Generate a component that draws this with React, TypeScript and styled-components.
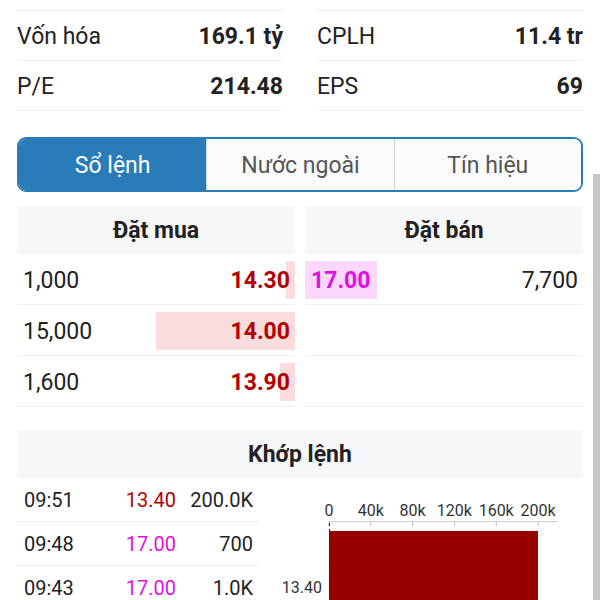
import React from 'react';
import styled, { createGlobalStyle } from 'styled-components';

const GlobalStyle = createGlobalStyle`
    html, body {
        margin: 0;
        padding: 0;
        background: #ffffff;
        overflow: hidden;
    }
    body {
        font-family: Roboto, 'Noto Sans', 'Liberation Sans', sans-serif;
        color: #222222;
    }
`;

const Colors = {
    RED: '#b30000',
    MAGENTA: '#e010e0',
    BAR_RED: '#990000',
    BLUE: '#2a7cb8',
    LINE: '#efefef',
    HEADER_BG: '#f6f7f8',
};

const Page = styled.div`
    position: relative;
    width: 600px;
    height: 600px;
    overflow: hidden;
    padding: 10px 17px 0;
    box-sizing: border-box;
`;

const StatsGrid = styled.div`
    display: grid;
    grid-template-columns: 1fr 1fr;
    column-gap: 34px;
`;

const StatColumn = styled.div`
    border-top: 1px solid ${Colors.LINE};
`;

const StatRow = styled.div`
    display: flex;
    justify-content: space-between;
    align-items: center;
    height: 49px;
    padding-top: 1px;
    box-sizing: border-box;
    height: 50px;
    border-bottom: 1px solid ${Colors.LINE};
    font-size: 23px;
`;

const StatValue = styled.span`
    font-weight: 700;
`;

const Tabs = styled.div`
    display: grid;
    grid-template-columns: repeat(3, 1fr);
    margin-top: 26px;
    height: 55px;
    border: 2px solid ${Colors.BLUE};
    border-radius: 9px;
    overflow: hidden;
    box-sizing: border-box;
`;

const Tab = styled.div<{ $active?: boolean }>`
    display: flex;
    align-items: center;
    justify-content: center;
    padding-top: 1px;
    font-size: 23px;
    background: ${(p) => (p.$active ? Colors.BLUE : '#fafafa')};
    color: ${(p) => (p.$active ? '#ffffff' : '#555555')};
    & + & {
        border-left: 1px solid #c9d3da;
    }
`;

const OrderBook = styled.div`
    display: grid;
    grid-template-columns: 1fr 1fr;
    column-gap: 10px;
    margin-top: 14px;
`;

const SectionHeader = styled.div`
    display: flex;
    align-items: center;
    justify-content: center;
    height: 48px;
    background: ${Colors.HEADER_BG};
    font-size: 23px;
    font-weight: 700;
`;

const BookRow = styled.div`
    display: flex;
    align-items: center;
    justify-content: space-between;
    height: 51px;
    padding-top: 2px;
    box-sizing: border-box;
    border-bottom: 1px solid ${Colors.LINE};
    font-size: 23px;
`;

const Qty = styled.span<{ $side: 'bid' | 'ask' }>`
    padding: ${(p) => (p.$side === 'bid' ? '0 0 0 6px' : '0 5px 0 0')};
`;

const PriceCell = styled.div<{ $side: 'bid' | 'ask' }>`
    position: relative;
    display: flex;
    justify-content: ${(p) => (p.$side === 'bid' ? 'flex-end' : 'flex-start')};
    align-items: center;
    height: 38px;
    min-width: 72px;
    padding: ${(p) => (p.$side === 'bid' ? '0 5px 0 0' : '0 0 0 6px')};
    box-sizing: border-box;
`;

const VolumeBar = styled.div<{ $side: 'bid' | 'ask' }>`
    position: absolute;
    top: 0;
    bottom: 0;
    ${(p) => (p.$side === 'bid' ? 'right: 0;' : 'left: 0;')}
    background: ${(p) => (p.$side === 'bid' ? '#fadcdc' : '#fcd8fc')};
`;

const Price = styled.span<{ $color: string }>`
    position: relative;
    color: ${(p) => p.$color};
    font-weight: 700;
`;

const MatchHeader = styled(SectionHeader)`
    margin-top: 23px;
`;

const MatchBody = styled.div`
    display: grid;
    grid-template-columns: 243px 1fr;
`;

const MatchRow = styled.div`
    display: grid;
    grid-template-columns: 1fr 76px 77px;
    align-items: center;
    height: 43px;
    padding: 0 7px;
    border-bottom: 1px solid ${Colors.LINE};
    font-size: 20px;
`;

const MatchCell = styled.span<{ $color?: string }>`
    text-align: right;
    color: ${(p) => p.$color || '#222222'};
    &:first-child {
        text-align: left;
    }
`;

const ChartBox = styled.div`
    height: 122px;
`;

const ScrollThumb = styled.div`
    position: absolute;
    top: 174px;
    right: 0;
    bottom: 0;
    width: 7px;
    background: #c6c6c6;
`;

const stats = [
    [
        ['Vốn hóa', '169.1 tỷ'],
        ['P/E', '214.48'],
    ],
    [
        ['CPLH', '11.4 tr'],
        ['EPS', '69'],
    ],
];

const bids = [
    { qty: '1,000', price: '14.30', bar: 9 },
    { qty: '15,000', price: '14.00', bar: 139 },
    { qty: '1,600', price: '13.90', bar: 15 },
];

const asks = [{ qty: '7,700', price: '17.00', bar: 72 }];

const matches = [
    { time: '09:51', price: '13.40', vol: '200.0K', color: Colors.RED },
    { time: '09:48', price: '17.00', vol: '700', color: Colors.MAGENTA },
    { time: '09:43', price: '17.00', vol: '1.0K', color: Colors.MAGENTA },
];

const MatchChart: React.FC = () => {
    const x0 = 69;
    const step = 41.8;
    const ticks = ['0', '40k', '80k', '120k', '160k', '200k'];
    return (
        <svg width="340" height="122" viewBox="0 0 340 122">
            {ticks.map((t, i) => (
                <g key={t}>
                    <text
                        x={x0 + i * step}
                        y={38}
                        textAnchor="middle"
                        fontSize="16"
                        fill="#333"
                        fontFamily="Roboto, sans-serif"
                    >
                        {t}
                    </text>
                    <line x1={x0 + i * step} y1={43} x2={x0 + i * step} y2={48} stroke="#bbb" />
                </g>
            ))}
            <line x1={x0} y1={43.5} x2={298} y2={43.5} stroke="#ccc" />
            <rect x={x0} y={53} width={step * 5} height={80} fill={Colors.BAR_RED} />
            <line x1={x0 + 0.5} y1={45} x2={x0 + 0.5} y2={122} stroke="#7a0000" strokeDasharray="3 3" />
            <text x={62} y={115} textAnchor="end" fontSize="16" fill="#333" fontFamily="Roboto, sans-serif">
                13.40
            </text>
        </svg>
    );
};

export default function App() {
    return (
        <>
            <GlobalStyle />
            <Page>
                <StatsGrid>
                    {stats.map((col, ci) => (
                        <StatColumn key={ci}>
                            {col.map(([label, value]) => (
                                <StatRow key={label}>
                                    <span>{label}</span>
                                    <StatValue>{value}</StatValue>
                                </StatRow>
                            ))}
                        </StatColumn>
                    ))}
                </StatsGrid>

                <Tabs>
                    <Tab $active>Sổ lệnh</Tab>
                    <Tab>Nước ngoài</Tab>
                    <Tab>Tín hiệu</Tab>
                </Tabs>

                <OrderBook>
                    <div>
                        <SectionHeader>Đặt mua</SectionHeader>
                        {bids.map((b) => (
                            <BookRow key={b.price}>
                                <Qty $side="bid">{b.qty}</Qty>
                                <PriceCell $side="bid">
                                    <VolumeBar $side="bid" style={{ width: b.bar }} />
                                    <Price $color={Colors.RED}>{b.price}</Price>
                                </PriceCell>
                            </BookRow>
                        ))}
                    </div>
                    <div>
                        <SectionHeader>Đặt bán</SectionHeader>
                        {asks.map((a) => (
                            <BookRow key={a.price}>
                                <PriceCell $side="ask">
                                    <VolumeBar $side="ask" style={{ width: a.bar }} />
                                    <Price $color={Colors.MAGENTA}>{a.price}</Price>
                                </PriceCell>
                                <Qty $side="ask">{a.qty}</Qty>
                            </BookRow>
                        ))}
                        <BookRow />
                        <BookRow />
                    </div>
                </OrderBook>

                <MatchHeader>Khớp lệnh</MatchHeader>
                <MatchBody>
                    <div>
                        {matches.map((m) => (
                            <MatchRow key={m.time}>
                                <MatchCell>{m.time}</MatchCell>
                                <MatchCell $color={m.color}>{m.price}</MatchCell>
                                <MatchCell>{m.vol}</MatchCell>
                            </MatchRow>
                        ))}
                    </div>
                    <ChartBox>
                        <MatchChart />
                    </ChartBox>
                </MatchBody>
                <ScrollThumb />
            </Page>
        </>
    );
}
